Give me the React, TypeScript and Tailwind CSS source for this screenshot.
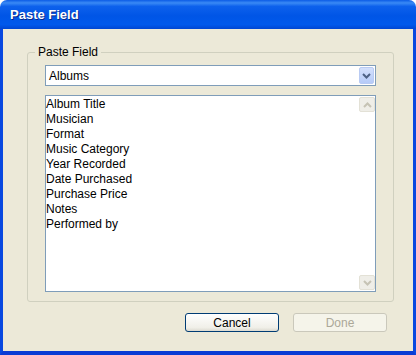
const fields = [
  "Album Title",
  "Musician",
  "Format",
  "Music Category",
  "Year Recorded",
  "Date Purchased",
  "Purchase Price",
  "Notes",
  "Performed by",
];

function Chevron({ up, color }: { up?: boolean; color: string }) {
  return (
    <svg width="9" height="6" viewBox="0 0 9 6" className="block">
      <path
        d={up ? "M1 5 L4.5 1.5 L8 5" : "M1 1 L4.5 4.5 L8 1"}
        fill="none"
        stroke={color}
        strokeWidth="2"
      />
    </svg>
  );
}

export default function App() {
  return (
    <div className="w-[416px] h-[355px] flex flex-col font-['Liberation_Sans',Arial,sans-serif] text-[12px] text-black">
      {/* TITLE BAR */}
      <div className="h-[29px] shrink-0 rounded-t-[7px] flex items-center pl-[10px] bg-[linear-gradient(180deg,#0b5ce6_0%,#3a8af5_10%,#0d61ec_22%,#0055e6_55%,#0059ec_85%,#0046d2_100%)]">
        <span className="text-white font-bold text-[13px] leading-none [text-shadow:1px_1px_0_#0a2a8a]">
          Paste Field
        </span>
      </div>

      {/* BODY */}
      <div className="flex-1 flex flex-col bg-[#ece9d8] border-x-[3px] border-b-[4px] border-x-[#0848e0] border-b-[#0a3bd4]">
        <fieldset className="mt-[16px] mx-[24px] h-[257px] border border-[#d0d0bf] rounded-[3px] px-[17px] pb-[9px] flex flex-col">
          <legend className="-ml-[10px] px-[3px] leading-[14px]">Paste Field</legend>

          {/* SELECT */}
          <div className="mt-[6px] h-[21px] w-[331px] border border-[#7f9db9] bg-white flex items-center justify-between">
            <span className="pl-[3px] leading-[14px]">Albums</span>
            <div className="h-[17px] w-[15px] mr-[1px] rounded-[2px] border border-[#b9cbf3] bg-[linear-gradient(180deg,#d3e0fc,#b6cbf8)] flex items-center justify-center">
              <Chevron color="#4d6185" />
            </div>
          </div>

          {/* LIST */}
          <div className="mt-[9px] h-[197px] w-[331px] border border-[#7f9db9] bg-white flex">
            <div className="flex-1 pt-[1px]">
              {fields.map((f) => (
                <div key={f} className="leading-[15px]">
                  {f}
                </div>
              ))}
            </div>
            <div className="w-[16px] flex flex-col justify-between py-[1px]">
              <div className="h-[15px] rounded-[2px] border border-[#e3e1d6] bg-[#efeee8] flex items-center justify-center">
                <Chevron up color="#c6c3b5" />
              </div>
              <div className="h-[15px] rounded-[2px] border border-[#e3e1d6] bg-[#efeee8] flex items-center justify-center">
                <Chevron color="#c6c3b5" />
              </div>
            </div>
          </div>
        </fieldset>

        {/* BUTTONS */}
        <div className="mt-[11px] flex justify-end gap-[14px] pr-[26px]">
          <button className="w-[94px] h-[19px] rounded-[3px] border border-[#003c74] bg-[linear-gradient(180deg,#ffffff,#f0efe8_80%,#dcdad0)] leading-[14px]">
            Cancel
          </button>
          <button className="w-[94px] h-[19px] rounded-[3px] border border-[#cac8bb] bg-[#f5f4ea] text-[#aca899] leading-[14px]">
            Done
          </button>
        </div>
      </div>
    </div>
  );
}
